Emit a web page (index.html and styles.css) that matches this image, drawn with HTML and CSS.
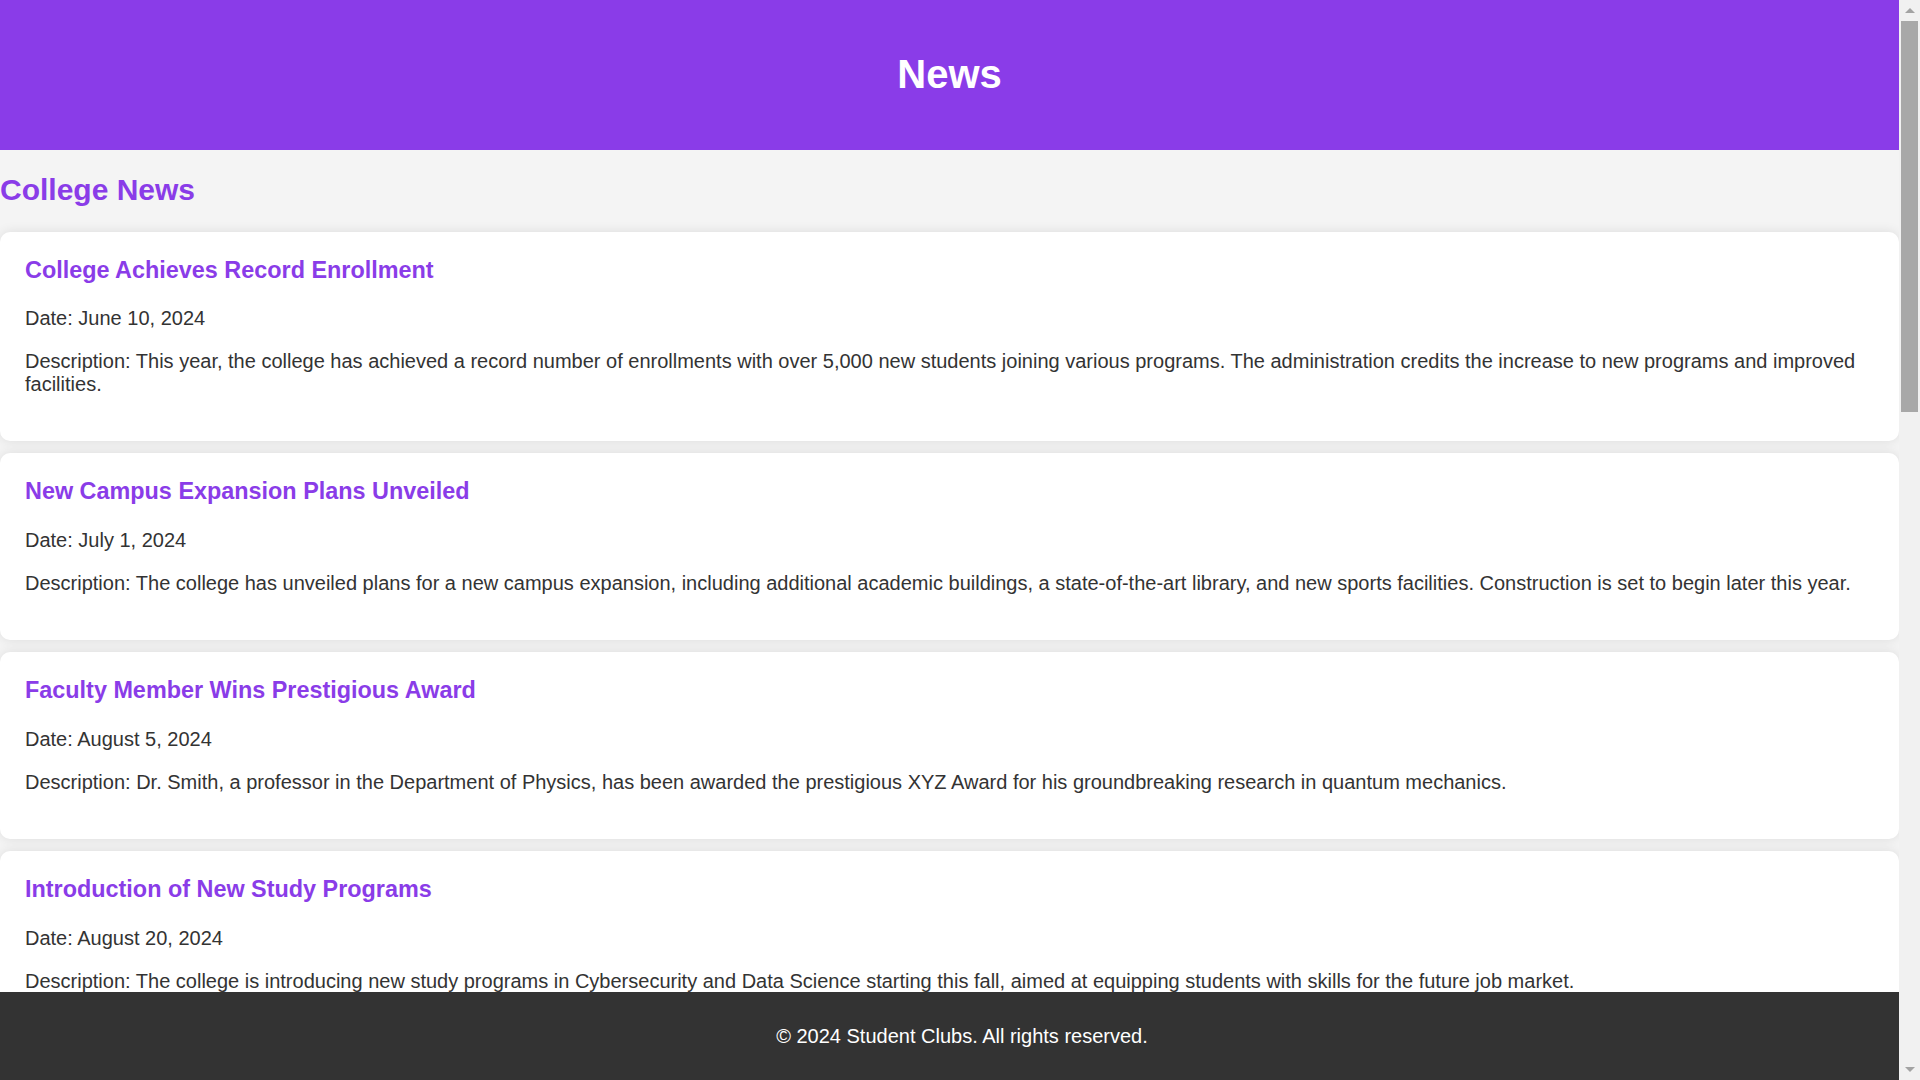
FILE: index.html
```html
<!DOCTYPE html>
<html lang="en">
<head>
<meta charset="UTF-8">
<title>News</title>
<link rel="stylesheet" href="styles.css">
</head>
<body>
<div class="page">
  <header class="site-header">
    <h1 class="site-title">News</h1>
  </header>
  <main class="content">
    <section class="news-section">
      <h2 class="section-title">College News</h2>
      <article class="news-card">
        <h3 class="news-title">College Achieves Record Enrollment</h3>
        <p class="news-text">Date: June 10, 2024</p>
        <p class="news-text">Description: This year, the college has achieved a record number of enrollments with over 5,000 new students joining various programs. The administration credits the increase to new programs and improved facilities.</p>
      </article>
      <article class="news-card">
        <h3 class="news-title">New Campus Expansion Plans Unveiled</h3>
        <p class="news-text">Date: July 1, 2024</p>
        <p class="news-text">Description: The college has unveiled plans for a new campus expansion, including additional academic buildings, a state-of-the-art library, and new sports facilities. Construction is set to begin later this year.</p>
      </article>
      <article class="news-card">
        <h3 class="news-title">Faculty Member Wins Prestigious Award</h3>
        <p class="news-text">Date: August 5, 2024</p>
        <p class="news-text">Description: Dr. Smith, a professor in the Department of Physics, has been awarded the prestigious XYZ Award for his groundbreaking research in quantum mechanics.</p>
      </article>
      <article class="news-card">
        <h3 class="news-title">Introduction of New Study Programs</h3>
        <p class="news-text">Date: August 20, 2024</p>
        <p class="news-text">Description: The college is introducing new study programs in Cybersecurity and Data Science starting this fall, aimed at equipping students with skills for the future job market.</p>
      </article>
      <article class="news-card">
        <h3 class="news-title">Annual Cultural Fest Announced</h3>
        <p class="news-text">Date: September 2, 2024</p>
        <p class="news-text">Description: The annual cultural fest will take place next month, featuring music, dance, drama and art competitions organized by the student clubs.</p>
      </article>
      <article class="news-card">
        <h3 class="news-title">New Scholarship Program Launched</h3>
        <p class="news-text">Date: September 15, 2024</p>
        <p class="news-text">Description: A new merit-based scholarship program has been launched to support outstanding students from all departments.</p>
      </article>
      <article class="news-card">
        <h3 class="news-title">Library Extends Opening Hours</h3>
        <p class="news-text">Date: October 1, 2024</p>
        <p class="news-text">Description: The college library will now remain open until midnight on weekdays to support students during the examination period.</p>
      </article>
      <article class="news-card">
        <h3 class="news-title">Sports Team Wins Regional Championship</h3>
        <p class="news-text">Date: October 12, 2024</p>
        <p class="news-text">Description: The college basketball team won the regional championship after an unbeaten season, bringing home the trophy for the first time in ten years.</p>
      </article>
    </section>
  </main>
</div>
<footer class="site-footer">
  <p class="footer-text">&copy; 2024 Student Clubs. All rights reserved.</p>
</footer>
<div class="scrollbar" aria-hidden="true">
  <span class="scroll-arrow scroll-arrow-up"></span>
  <span class="scroll-thumb"></span>
  <span class="scroll-arrow scroll-arrow-down"></span>
</div>
</body>
</html>
```
FILE: styles.css
```css
body {
  margin: 0;
  padding: 0;
  font-family: "Liberation Sans", Arial, sans-serif;
  font-size: 20px;
  color: #333;
  background: #f4f4f4;
}

.page {
  margin-right: 21px;
  overflow: hidden;
}

.site-header {
  background: #8a3ce8;
  color: #fff;
  text-align: center;
  padding: 25px 0;
}

.site-title {
  margin: 26px 0 27.6px;
  font-size: 40px;
  font-weight: bold;
  line-height: 46px;
}

.content {
  padding: 0 0 88px;
}

.section-title {
  color: #8a3ce8;
  font-size: 30px;
  line-height: 34px;
  margin: 23px 0 25px;
}

.news-card {
  background: #fff;
  border-radius: 10px;
  box-shadow: 0 0 12px rgba(0, 0, 0, 0.1);
  padding: 25px;
  margin-bottom: 12.5px;
}

.news-title {
  color: #8a3ce8;
  font-size: 23.4px;
  line-height: 27px;
  margin: 0 0 23.4px;
}

.news-text {
  margin: 20px 0;
  line-height: 23px;
}

.site-footer {
  position: fixed;
  left: 0;
  right: 21px;
  bottom: 0;
  padding: 12.5px 0 12.5px 25px;
  background: #333;
  color: #fff;
  text-align: center;
}

.footer-text {
  margin: 20px 0;
  line-height: 23px;
}

/* drawn browser scrollbar */
.scrollbar {
  position: fixed;
  top: 0;
  right: 0;
  bottom: 0;
  width: 21px;
  background: #f1f1f1;
  display: flex;
  flex-direction: column;
  align-items: center;
}

.scroll-arrow {
  flex: 0 0 21px;
  width: 21px;
  display: flex;
  align-items: center;
  justify-content: center;
}

.scroll-arrow::before {
  content: "";
  width: 0;
  height: 0;
  border-left: 5px solid transparent;
  border-right: 5px solid transparent;
}

.scroll-arrow-up::before {
  border-bottom: 5px solid #a3a3a3;
}

.scroll-arrow-down {
  margin-top: auto;
}

.scroll-arrow-down::before {
  border-top: 5px solid #a3a3a3;
}

.scroll-thumb {
  width: 17px;
  height: 391px;
  background: #a8a8a8;
}
```
